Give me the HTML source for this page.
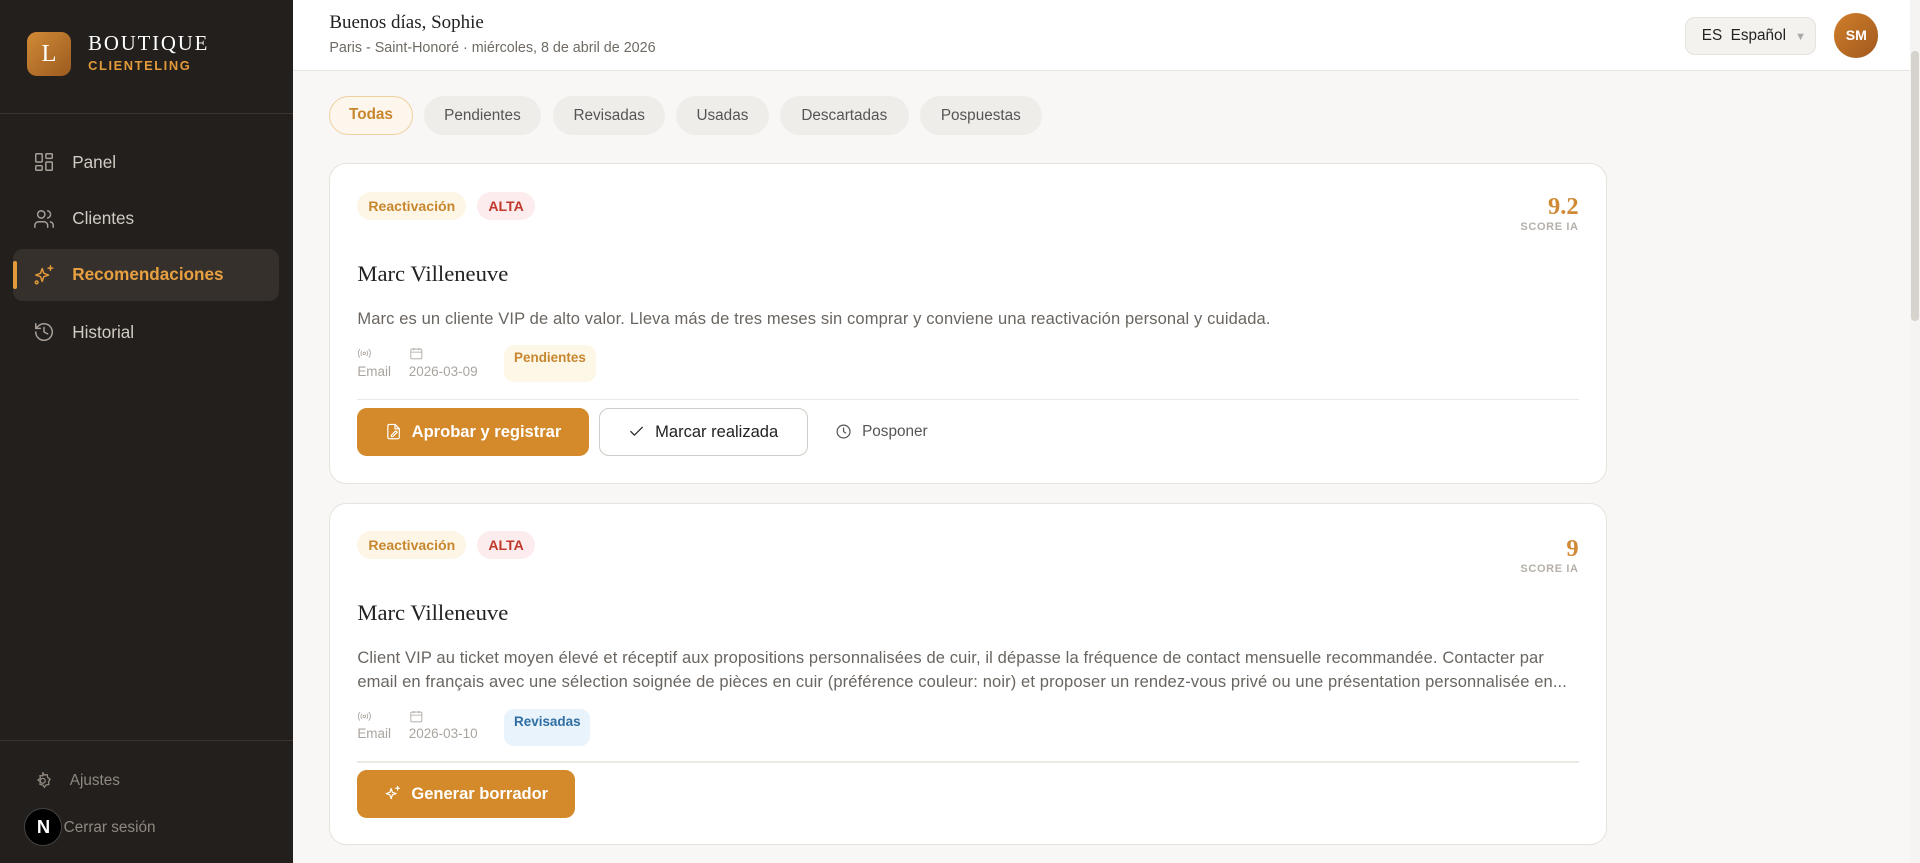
<!DOCTYPE html>
<html><head><meta charset="utf-8">
<style>
*{box-sizing:border-box;margin:0;padding:0}
html,body{width:1920px;height:863px;overflow:hidden}
body{zoom:1.22449;width:1568px;height:705px;background:#f8f7f5;font-family:"Liberation Sans",sans-serif;position:relative}
.serif{font-family:"Liberation Serif",serif}
.sb{position:absolute;left:0;top:0;width:239px;height:705px;background:#231f1c}
.logo{position:absolute;left:22px;top:26px;width:36px;height:36px;border-radius:8px;background:linear-gradient(135deg,#d08a35,#9c5b20);color:#fff;font:20px "Liberation Serif",serif;text-align:center;line-height:36px}
.bt{position:absolute;left:72px;top:25px;color:#fff;font:17px "Liberation Serif",serif;letter-spacing:1.5px}
.cl{position:absolute;left:72px;top:47px;color:#e39a3b;font-size:10.5px;font-weight:bold;letter-spacing:1.3px}
.hr{position:absolute;left:0;width:239px;height:1px;background:#3a3530}
.nav{position:absolute;left:11px;width:217px;height:43px;display:flex;align-items:center;padding-left:16px;color:#d2cbc3;font-size:14px}
.nav svg{width:18px;height:18px;margin-right:14px;fill:none;stroke:#a8a098;stroke-width:1.6;stroke-linecap:round;stroke-linejoin:round}
.nav.act{background:#35302c;border-radius:8px;color:#e8a040;font-weight:bold}
.nav.act:before{content:"";position:absolute;left:0;top:10px;width:3px;height:23px;background:#e39a3b;border-radius:2px}
.nav.act svg{stroke:#e39a3b}
.hd{position:absolute;left:239px;top:0;width:1321px;height:58px;background:#fff;border-bottom:1px solid #e8e5e0}
.tab{position:absolute;top:78px;height:32px;border-radius:16px;background:#efedea;color:#555;font-size:12.5px;line-height:32px;text-align:center}
.card{position:absolute;left:269px;width:1043px;background:#fff;border:1px solid #e6e2dd;border-radius:14px}
.bd{position:absolute;height:23px;line-height:23px;border-radius:12px;font-size:11.5px;font-weight:bold;padding:0 9px}
.sc{position:absolute;right:22px;text-align:right}
.sc b{display:block;font:bold 20px "Liberation Serif",serif;color:#d08a35}
.sc i{display:block;font-style:normal;font-size:9px;font-weight:bold;color:#b5b0aa;letter-spacing:.5px}
.nm{position:absolute;left:22px;font:18.5px "Liberation Serif",serif;color:#222}
.ds{position:absolute;left:22px;right:22px;font-size:13.5px;letter-spacing:.1px;color:#6a6560;line-height:19px}
.meta{position:absolute;left:22px;font-size:11px;color:#aaa49e}
.meta svg{fill:none;stroke:#aaa49e;stroke-width:1.4}
.pill{position:absolute;left:142px;padding:4px 8px 14px;border-radius:8px;font-size:11px;font-weight:bold}
.line{position:absolute;left:22px;right:22px;height:1px;background:#ece9e5}
.btn{position:absolute;height:40px;border-radius:8px;display:flex;align-items:center;justify-content:center;font-size:13.5px}
.btn svg{fill:none;stroke-width:1.7;stroke-linecap:round;stroke-linejoin:round;margin-right:8px}
</style></head><body>
<div class="sb">
<div class="logo">L</div><div class="bt">BOUTIQUE</div><div class="cl">CLIENTELING</div>
<div class="hr" style="top:92px"></div>
<div class="nav" style="top:111px"><svg viewBox="0 0 24 24"><rect x="3" y="3" width="7" height="9" rx="1"/><rect x="14" y="3" width="7" height="5" rx="1"/><rect x="14" y="12" width="7" height="9" rx="1"/><rect x="3" y="16" width="7" height="5" rx="1"/></svg>Panel</div>
<div class="nav" style="top:157px"><svg viewBox="0 0 24 24"><circle cx="9" cy="7" r="4"/><path d="M2 21v-2a4 4 0 0 1 4-4h6a4 4 0 0 1 4 4v2M16 3.1a4 4 0 0 1 0 7.8M22 21v-2a4 4 0 0 0-3-3.9"/></svg>Clientes</div>
<div class="nav act" style="top:203px"><svg viewBox="0 0 24 24"><path d="M10 5l1.8 5.2L17 12l-5.2 1.8L10 19l-1.8-5.2L3 12l5.2-1.8z"/><path d="M19 2v5M16.5 4.5h5"/><circle cx="4" cy="20" r="1.5"/></svg>Recomendaciones</div>
<div class="nav" style="top:250px"><svg viewBox="0 0 24 24"><path d="M3 12a9 9 0 1 0 3-6.7L3 8"/><path d="M3 3v5h5M12 7v5l4 2"/></svg>Historial</div>
<div class="hr" style="top:604px"></div>
<div class="nav" style="top:616px;color:#8f8880;font-size:12.5px"><svg viewBox="0 0 24 24" style="width:16px;height:16px;stroke:#8f8880"><circle cx="12" cy="12" r="3"/><path d="M12 2l2 3 3.5-.5.5 3.5 3 2-2 3 .5 3.5-3.5.5-2 3-2-3-3.5-.5.5-3.5-3-2 3-2-.5-3.5 3.5.5z"/></svg>Ajustes</div>
<div style="position:absolute;left:52px;top:669px;color:#8f8880;font-size:12.5px">Cerrar sesión</div>
<div style="position:absolute;left:20px;top:660px;width:31px;height:31px;border-radius:50%;background:#000;border:1px solid #444;color:#fff;font-size:15px;font-weight:bold;text-align:center;line-height:29px">N</div>
</div>
<div class="hd">
<div class="serif" style="position:absolute;left:30px;top:10px;font-size:15.5px;color:#222">Buenos días, Sophie</div>
<div style="position:absolute;left:30px;top:33px;font-size:11.7px;color:#6f6a64">Paris - Saint-Honoré · miércoles, 8 de abril de 2026</div>
<div style="position:absolute;left:1137px;top:14px;width:107px;height:31px;border-radius:8px;background:#f3f2ef;border:1px solid #e6e3de;font-size:12.5px;color:#222;line-height:29px;padding-left:13px">ES&nbsp; Español <span style="color:#aaa;font-size:9px;margin-left:4px">▼</span></div>
<div style="position:absolute;left:1259px;top:11px;width:36px;height:36px;border-radius:50%;background:linear-gradient(135deg,#d07f2a,#a0581e);color:#fff;font-size:11.5px;font-weight:bold;text-align:center;line-height:36px">SM</div>
</div>
<div style="position:absolute;left:1560px;top:0;width:8px;height:705px;background:#f5f4f2"></div>
<div style="position:absolute;left:1561px;top:42px;width:6px;height:220px;background:#d6d2cc;border-radius:3px"></div>

<div class="tab" style="left:269px;width:68px;background:#fdf6ec;border:1px solid #efcf9f;color:#c8862e;font-weight:bold;line-height:30px">Todas</div>
<div class="tab" style="left:346px;width:96px">Pendientes</div>
<div class="tab" style="left:452px;width:91px">Revisadas</div>
<div class="tab" style="left:552px;width:76px">Usadas</div>
<div class="tab" style="left:637px;width:105px">Descartadas</div>
<div class="tab" style="left:751px;width:100px">Pospuestas</div>

<div class="card" style="top:133px;height:262px">
<div class="bd" style="left:22px;top:23px;background:#fdf6e6;color:#c8862e">Reactivación</div>
<div class="bd" style="left:120px;top:23px;background:#fdeced;color:#c0392b">ALTA</div>
<div class="sc" style="top:24px"><b>9.2</b><i>SCORE IA</i></div>
<div class="nm" style="top:79px">Marc Villeneuve</div>
<div class="ds" style="top:117px">Marc es un cliente VIP de alto valor. Lleva más de tres meses sin comprar y conviene una reactivación personal y cuidada.</div>
<div class="meta" style="top:149px"><svg width="12" height="12" viewBox="0 0 24 24"><circle cx="12" cy="12" r="2"/><path d="M8 8a6 6 0 0 0 0 8M16 8a6 6 0 0 1 0 8M5 5a10 10 0 0 0 0 14M19 5a10 10 0 0 1 0 14"/></svg><br>Email</div>
<div class="meta" style="left:64px;top:149px"><svg width="12" height="12" viewBox="0 0 24 24"><rect x="3" y="5" width="18" height="16" rx="2"/><path d="M3 10h18M8 3v4M16 3v4"/></svg><br>2026-03-09</div>
<div class="pill" style="top:148px;background:#fdf7e8;color:#c8862e">Pendientes</div>
<div class="line" style="top:192px"></div>
<div class="btn" style="left:22px;top:199px;width:189px;background:#d4892a;color:#fff;font-weight:bold"><svg width="14" height="14" viewBox="0 0 24 24" stroke="#fff"><path d="M14 2H6a2 2 0 0 0-2 2v16a2 2 0 0 0 2 2h12a2 2 0 0 0 2-2V8z"/><path d="M14 2v6h6M9 17l6-6 2 2-6 6H9z"/></svg>Aprobar y registrar</div>
<div class="btn" style="left:219px;top:199px;width:171px;background:#fff;border:1px solid #d0ccc7;color:#222"><svg width="14" height="14" viewBox="0 0 24 24" stroke="#222"><path d="M4 12l5 5L20 6"/></svg>Marcar realizada</div>
<div class="btn" style="left:410px;top:199px;width:80px;color:#555;font-size:12.5px"><svg width="14" height="14" viewBox="0 0 24 24" stroke="#555"><circle cx="12" cy="12" r="9"/><path d="M12 7v5l3 2"/></svg>Posponer</div>
</div>

<div class="card" style="top:411px;height:279px">
<div class="bd" style="left:22px;top:22px;background:#fdf6e6;color:#c8862e">Reactivación</div>
<div class="bd" style="left:120px;top:22px;background:#fdeced;color:#c0392b">ALTA</div>
<div class="sc" style="top:25px"><b>9</b><i>SCORE IA</i></div>
<div class="nm" style="top:78px">Marc Villeneuve</div>
<div class="ds" style="top:116px;white-space:nowrap;overflow:hidden;text-overflow:ellipsis">Client VIP au ticket moyen élevé et réceptif aux propositions personnalisées de cuir, il dépasse la fréquence de contact mensuelle recommandée. Contacter par<br>email en français avec une sélection soignée de pièces en cuir (préférence couleur: noir) et proposer un rendez-vous privé ou une présentation personnalisée en...</div>
<div class="meta" style="top:167px"><svg width="12" height="12" viewBox="0 0 24 24"><circle cx="12" cy="12" r="2"/><path d="M8 8a6 6 0 0 0 0 8M16 8a6 6 0 0 1 0 8M5 5a10 10 0 0 0 0 14M19 5a10 10 0 0 1 0 14"/></svg><br>Email</div>
<div class="meta" style="left:64px;top:167px"><svg width="12" height="12" viewBox="0 0 24 24"><rect x="3" y="5" width="18" height="16" rx="2"/><path d="M3 10h18M8 3v4M16 3v4"/></svg><br>2026-03-10</div>
<div class="pill" style="top:167px;background:#e8f3fc;color:#2f6ea3">Revisadas</div>
<div class="line" style="top:210px"></div>
<div class="btn" style="left:22px;top:217px;width:178px;height:39px;background:#d4892a;color:#fff;font-weight:bold"><svg width="14" height="14" viewBox="0 0 24 24" stroke="#fff"><path d="M10 5l1.8 5.2L17 12l-5.2 1.8L10 19l-1.8-5.2L3 12l5.2-1.8z"/><path d="M19 2v5M16.5 4.5h5"/></svg>Generar borrador</div>
</div>
</body></html>
